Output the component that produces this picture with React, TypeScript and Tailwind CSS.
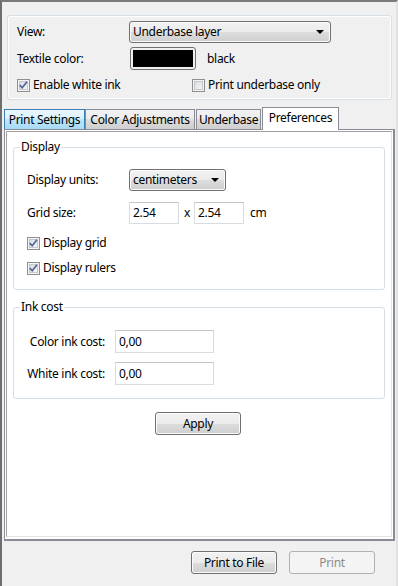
import React from "react";

const btnBg =
  "bg-[linear-gradient(#f2f2f2_0%,#ebebeb_50%,#dddddd_50%,#cfcfcf_100%)]";

function WinButton({
  children,
  disabled,
  className = "",
}: {
  children: React.ReactNode;
  disabled?: boolean;
  className?: string;
}) {
  return (
    <div
      className={
        "flex items-center justify-center rounded-[3px] border " +
        (disabled
          ? "border-[#adb2b5] bg-[#f4f4f4] text-[#8d8d8d] "
          : "border-[#707070] text-black shadow-[inset_0_0_0_1px_#fbfbfb] " + btnBg + " ") +
        className
      }
    >
      {children}
    </div>
  );
}

function Arrow() {
  return (
    <svg width="8" height="4" viewBox="0 0 8 4" className="shrink-0">
      <polygon points="0,0 8,0 4,4" fill="#000" />
    </svg>
  );
}

function Dropdown({ text, className = "" }: { text: string; className?: string }) {
  return (
    <div
      className={
        "flex items-center justify-between rounded-[3px] border border-[#707070] pl-[3px] pr-[6px] shadow-[inset_0_0_0_1px_#fbfbfb] " +
        btnBg +
        " " +
        className
      }
    >
      <span>{text}</span>
      <Arrow />
    </div>
  );
}

function CheckBox({ checked }: { checked?: boolean }) {
  return (
    <span className="flex h-[13px] w-[13px] shrink-0 items-center justify-center border border-[#8e8f8f] bg-[#f4f4f4]">
      <span className="flex h-[9px] w-[9px] items-center justify-center border border-[#c4c7cc] bg-[linear-gradient(135deg,#d9dde3,#f5f6f7)]">
        {checked && (
          <svg width="9" height="9" viewBox="0 0 9 9" className="overflow-visible">
            <polyline
              points="0.8,4.2 3.2,6.8 8,0.8"
              fill="none"
              stroke="#51659a"
              strokeWidth="1.7"
            />
          </svg>
        )}
      </span>
    </span>
  );
}

function TextBox({ value, className = "" }: { value: string; className?: string }) {
  return (
    <div
      className={
        "flex items-center border border-[#d8dbdf] border-t-[#c2c5c9] bg-white pl-[3px] " +
        className
      }
    >
      {value}
    </div>
  );
}

function GroupBox({
  title,
  children,
  className = "",
}: {
  title: string;
  children: React.ReactNode;
  className?: string;
}) {
  return (
    <fieldset
      className={"rounded-[3px] border border-[#d5dfe5] " + className}
    >
      <legend className="ml-[6px] px-[1px] leading-[16px]">{title}</legend>
      {children}
    </fieldset>
  );
}

export default function App() {
  return (
    <div className="h-[586px] w-[398px] overflow-hidden border-l-2 border-t-2 border-r-2 border-l-[#6e6e6e] border-t-[#7a7a7a] border-r-[#e2e2e2] bg-[#f0f0f0] font-['Noto_Sans',sans-serif] text-[12px] leading-[16px] tracking-[-0.3px] text-black">
      {/* Top group */}
      <div className="ml-[5px] mt-[13px] flex h-[85px] w-[385px] flex-col rounded-[3px] border border-[#d5dfe5] pl-[9px] pt-[5px] shadow-[inset_0_0_0_1px_#ffffff]">
        <div className="flex h-[22px] items-center">
          <span className="w-[112px]">View:</span>
          <Dropdown text="Underbase layer" className="h-[22px] w-[202px]" />
        </div>
        <div className="mt-[4px] flex h-[23px] items-center">
          <span className="w-[113px]">Textile color:</span>
          <div className="flex h-[23px] w-[66px] rounded-[3px] border border-[#707070] bg-[#f0f0f0] p-[2px]">
            <div className="h-full w-full bg-black" />
          </div>
          <span className="ml-[11px]">black</span>
        </div>
        <div className="mt-[7px] flex h-[16px] items-center">
          <div className="flex w-[175px] items-center gap-[3px]">
            <CheckBox checked />
            <span>Enable white ink</span>
          </div>
          <div className="flex items-center gap-[3px]">
            <CheckBox />
            <span>Print underbase only</span>
          </div>
        </div>
      </div>

      {/* Tabs */}
      <div className="relative z-10 ml-[2px] mt-[7px] flex h-[22px] items-end">
        <div className="flex h-[20px] w-[81px] items-center justify-center border border-b-0 border-[#3c7fb1] bg-[linear-gradient(#eaf6fd_0%,#d9f0fc_50%,#bee6fd_50%,#a7d9f5_100%)]">
          Print Settings
        </div>
        <div className={"flex h-[20px] w-[110px] items-center justify-center border border-b-0 border-[#898c95] " + btnBg}>
          Color Adjustments
        </div>
        <div className={"ml-[1px] flex h-[20px] w-[65px] items-center justify-center border border-b-0 border-[#898c95] " + btnBg}>
          Underbase
        </div>
        <div className="-mb-px ml-[1px] flex h-[23px] w-[77px] items-start justify-center border border-b-0 border-[#898c95] bg-white pt-[2px]">
          Preferences
        </div>
      </div>

      {/* Tab panel */}
      <div className="ml-[2px] flex h-[412px] w-[391px] border border-b-2 border-r-2 border-[#898c95] bg-white">
        <div className="m-[1px] mb-[2px] flex flex-1 flex-col border border-l-[#a0a0a0] border-t-[#a0a0a0] border-r-[#e3e3e3] border-b-[#e3e3e3]">
          <GroupBox title="Display" className="ml-[6px] mt-[7px] w-[372px]">
            <div className="flex flex-col pb-[13px] pl-[13px] pt-[14px]">
              <div className="flex h-[22px] items-center">
                <span className="w-[102px]">Display units:</span>
                <Dropdown text="centimeters" className="h-[22px] w-[97px]" />
              </div>
              <div className="mt-[11px] flex h-[22px] items-center">
                <span className="w-[102px]">Grid size:</span>
                <TextBox value="2.54" className="h-[22px] w-[50px]" />
                <span className="ml-[5px] w-[10px]">x</span>
                <TextBox value="2.54" className="h-[22px] w-[50px]" />
                <span className="ml-[6px]">cm</span>
              </div>
              <div className="mt-[11px] flex h-[16px] items-center gap-[3px]">
                <CheckBox checked />
                <span>Display grid</span>
              </div>
              <div className="mt-[9px] flex h-[16px] items-center gap-[3px]">
                <CheckBox checked />
                <span>Display rulers</span>
              </div>
            </div>
          </GroupBox>

          <GroupBox title="Ink cost" className="ml-[6px] mt-[9px] w-[372px]">
            <div className="flex flex-col pb-[13px] pt-[15px]">
              <div className="flex h-[23px] items-center">
                <span className="w-[91px] text-right">Color ink cost:</span>
                <TextBox value="0,00" className="ml-[10px] h-[23px] w-[99px]" />
              </div>
              <div className="mt-[9px] flex h-[23px] items-center">
                <span className="w-[91px] text-right">White ink cost:</span>
                <TextBox value="0,00" className="ml-[10px] h-[23px] w-[99px]" />
              </div>
            </div>
          </GroupBox>

          <WinButton className="ml-[148px] mt-[13px] h-[23px] w-[86px]">Apply</WinButton>
        </div>
      </div>

      {/* Bottom buttons */}
      <div className="mt-[10px] flex justify-end gap-[12px] pr-[21px]">
        <WinButton className="h-[23px] w-[86px]">Print to File</WinButton>
        <WinButton disabled className="h-[23px] w-[86px]">
          Print
        </WinButton>
      </div>
    </div>
  );
}
